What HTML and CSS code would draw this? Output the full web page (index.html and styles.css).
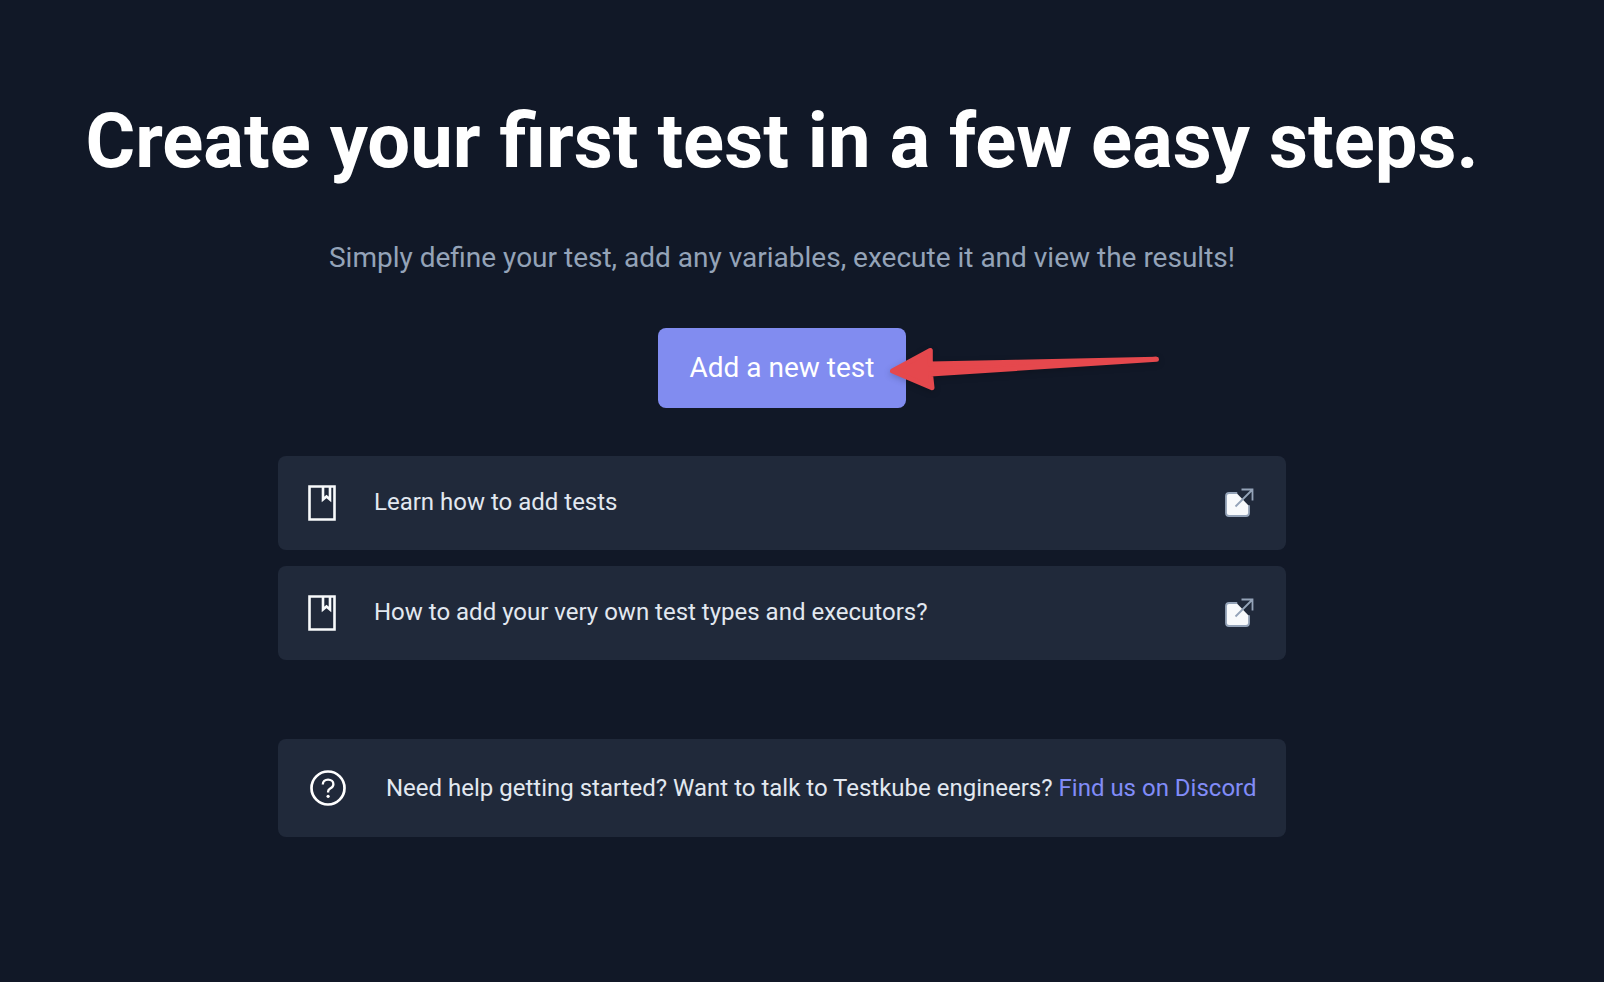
FILE: index.html
```html
<!DOCTYPE html>
<html lang="en">
<head>
<meta charset="utf-8">
<meta name="viewport" content="width=device-width, initial-scale=1">
<title>Create your first test</title>
<link rel="stylesheet" href="styles.css">
</head>
<body>
<svg class="symbols" aria-hidden="true">
  <symbol id="icon-book" viewBox="0 0 28 36">
    <path d="M1.5 1.5h25v33h-25z M15 2v12.5l3.5-3 3.5 3V2" fill="none" stroke="currentColor" stroke-width="2.6"/>
  </symbol>
  <symbol id="icon-external" viewBox="0 0 30 30">
    <path d="M12.500 5H5Q2 5 2 8V25Q2 28 5 28H22Q25 28 25 25V18Z" fill="#f8fafc"/>
    <path d="M12.500 5H5Q2 5 2 8V25Q2 28 5 28H22Q25 28 25 25V18" fill="none" stroke="#94a3b8" stroke-width="1.8" stroke-linecap="round"/>
    <path d="M11.500 18.500 28.500 1.500M17.500 1.500h11v11" fill="none" stroke="#94a3b8" stroke-width="1.800"/>
  </symbol>
</svg>
<main class="page">
  <h1 class="title">Create your first test in a few easy steps.</h1>
  <p class="subtitle">Simply define your test, add any variables, execute it and view the results!</p>
  <div class="action">
    <button class="button" type="button">Add a new test</button>
    <svg class="pointer" viewBox="0 0 276 52" aria-hidden="true">
      <path d="M4.500 26 42.300 5.500 42.300 19 268.500 14.300 42.500 29 44 42.700Z" fill="#e5484d" stroke="#e5484d" stroke-width="5" stroke-linejoin="round"/>
    </svg>
  </div>
  <nav class="links" aria-label="Documentation">
    <a class="card" href="#add-tests">
      <svg class="book" aria-hidden="true"><use href="#icon-book"/></svg>
      <span class="label">Learn how to add tests</span>
      <svg class="external" aria-hidden="true"><use href="#icon-external"/></svg>
    </a>
    <a class="card" href="#executors">
      <svg class="book" aria-hidden="true"><use href="#icon-book"/></svg>
      <span class="label">How to add your very own test types and executors?</span>
      <svg class="external" aria-hidden="true"><use href="#icon-external"/></svg>
    </a>
  </nav>
  <section class="help">
    <svg class="question" viewBox="0 0 36 36" aria-hidden="true">
      <circle cx="18" cy="18" r="16.500" fill="none" stroke="currentColor" stroke-width="2.700"/>
      <path d="M12.800 14.500C12.800 11.500 15 9.600 18.100 9.600S23.400 11.500 23.400 14.200C23.400 16.500 22 17.500 20.200 18.500C18.700 19.300 18.100 20 18.100 21.600V22.600" fill="none" stroke="currentColor" stroke-width="2.300"/>
      <circle cx="18.100" cy="26.300" r="1.600" fill="currentColor"/>
    </svg>
    <p class="help-text">Need help getting started? Want to talk to Testkube engineers? <a class="discord" href="#discord">Find us on Discord</a></p>
  </section>
</main>
</body>
</html>
```

FILE: styles.css
```css
* {
  box-sizing: border-box;
}

body {
  margin: 0;
  background: #111827;
  color: #e2e8f0;
  font-family: Roboto, "Liberation Sans", sans-serif;
}

.symbols {
  display: none;
}

.page {
  display: flex;
  flex-direction: column;
  align-items: center;
  min-height: 100vh;
  padding: 96px 80px 48px 40px;
}

.title {
  margin: 0 0 52px;
  color: #fff;
  font-size: 76px;
  font-weight: 700;
  line-height: 90px;
  text-align: center;
}

.subtitle {
  margin: 0 0 50px;
  color: #94a3b8;
  font-size: 28px;
  line-height: 40px;
  text-align: center;
}

.action {
  position: relative;
  margin-bottom: 48px;
}

.button {
  padding: 20px 32px;
  border: 0;
  border-radius: 8px;
  background: #818cf0;
  color: #fff;
  font: inherit;
  font-size: 28px;
  line-height: 40px;
}

.pointer {
  position: absolute;
  top: 17px;
  left: calc(100% - 18px);
  width: 276px;
  height: 52px;
  pointer-events: none;
  filter: drop-shadow(0 2px 3px rgb(0 0 0 / 20%));
}

.links {
  display: flex;
  flex-direction: column;
  gap: 16px;
  width: 100%;
  max-width: 1008px;
  margin-bottom: 79px;
}

.card,
.help {
  display: flex;
  align-items: center;
  border-radius: 8px;
  background: #20293a;
  font-size: 24px;
  line-height: 36px;
}

.card {
  padding: 28px 32px 28px 30px;
  color: inherit;
  text-decoration: none;
}

.book {
  flex: none;
  width: 28px;
  height: 36px;
  margin-right: 38px;
  color: #f8fafc;
}

.label {
  flex: 1;
  padding-bottom: 2px;
}

.external {
  flex: none;
  width: 30px;
  height: 30px;
}

.help {
  width: 100%;
  max-width: 1008px;
  padding: 31px 24px 31px 32px;
}

.question {
  flex: none;
  width: 36px;
  height: 36px;
  margin-right: 40px;
  color: #fff;
}

.help-text {
  margin: 0;
}

.discord {
  color: #818cf8;
  text-decoration: none;
}
```
